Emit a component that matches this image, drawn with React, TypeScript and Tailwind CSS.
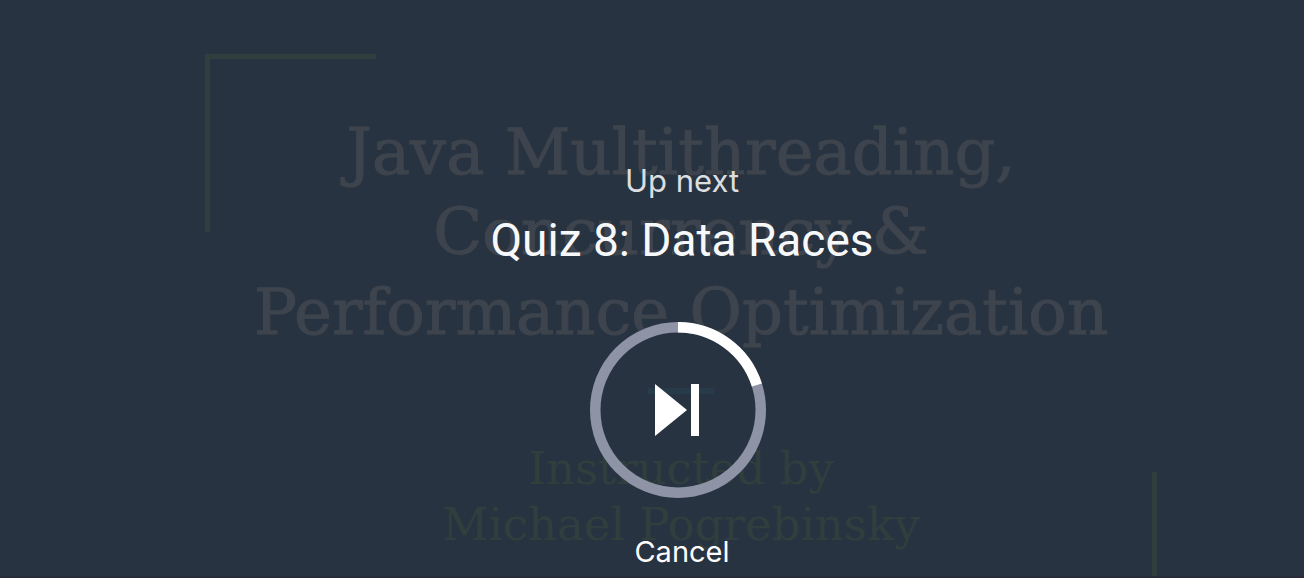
const RADIUS = 83;
const LENGTH = 2 * Math.PI * RADIUS;

function Slide() {
  return (
    <section
      aria-label="Lecture slide"
      className="col-start-1 row-start-1 flex min-h-0 justify-center pt-[54px] pl-[58px]"
    >
      <div className="grid h-[595px] w-full max-w-[952px]">
        <div className="col-start-1 row-start-1 h-[178px] w-[171px] border-t-[5px] border-l-[5px] border-[#303e3d]" />
        <div className="col-start-1 row-start-1 h-[177px] w-[171px] self-end justify-self-end border-r-[5px] border-b-[5px] border-[#303e3d]" />
        <div className="col-start-1 row-start-1 flex flex-col items-center pt-[58px] text-center font-['Roboto_Slab','DejaVu_Serif',serif] whitespace-nowrap">
          <h1 className="text-[64px] leading-[80px] text-[#3e444d] [-webkit-text-stroke:1px_#3e444d]">
            Java Multithreading,
            <br />
            Concurrency &amp;
            <br />
            Performance Optimization
          </h1>
          <div className="mt-[36px] h-[6px] w-[66px] bg-[#283b4a]" />
          <p className="mt-[47px] text-[45px] leading-[56px] text-[#303e3d]">
            Instructed by
            <br />
            Michael Pogrebinsky
          </p>
        </div>
      </div>
    </section>
  );
}

function NextButton({ progress }: { progress: number }) {
  return (
    <button type="button" aria-label="Play next" className="mt-[50px] mr-2 cursor-pointer rounded-full">
      <svg viewBox="0 0 176 176" className="block size-[176px]" fill="none">
        <circle cx="88" cy="88" r={RADIUS - 0.25} stroke="#8e94a6" strokeWidth="10.5" />
        <circle
          cx="88"
          cy="88"
          r={RADIUS - 0.25}
          stroke="#fff"
          strokeWidth="10.5"
          strokeDasharray={`${LENGTH * progress} ${LENGTH}`}
          transform="rotate(-90 88 88)"
        />
        <path d="M65 62v52l32-26zM101 62h8v52h-8z" fill="#fff" />
      </svg>
    </button>
  );
}

export default function App() {
  return (
    <main className="grid h-screen grid-rows-[minmax(0,1fr)] overflow-hidden border-b-2 border-[#292d3b] bg-[#283341] font-['Inter','Liberation_Sans',sans-serif]">
      <Slide />
      <section
        aria-label="Up next"
        className="z-10 col-start-1 row-start-1 flex flex-col items-center pt-[159px] pl-[60px] text-center whitespace-nowrap"
      >
        <p className="text-[31px] leading-[44px] text-[#dcdee0]">Up next</p>
        <h2 className="mt-[5px] font-['Roboto','Inter',sans-serif] text-[46px] leading-[64px] text-[#f7f8fa]">
          Quiz 8: Data Races
        </h2>
        <NextButton progress={0.2} />
        <button type="button" className="mt-[32px] cursor-pointer text-[29px] leading-[44px] text-white">
          Cancel
        </button>
      </section>
    </main>
  );
}
